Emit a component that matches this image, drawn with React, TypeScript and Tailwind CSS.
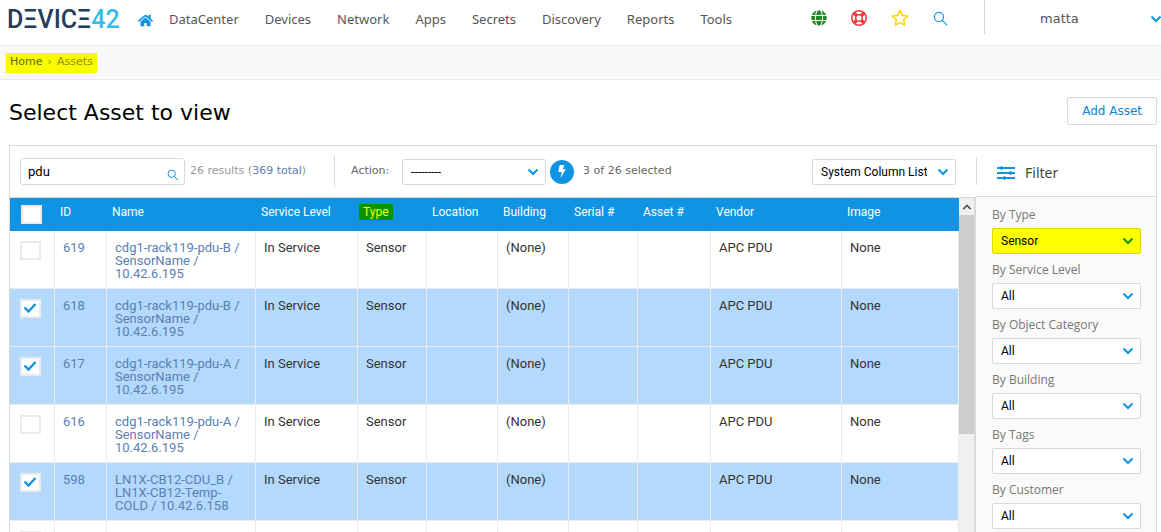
import { type ReactNode } from "react";
import { FaGlobe, FaHome } from "react-icons/fa";
import { clsx } from "clsx";

const NAV = ["DataCenter", "Devices", "Network", "Apps", "Secrets", "Discovery", "Reports", "Tools"];

const COLUMNS = [
  { label: "ID", width: "w-[52px]" },
  { label: "Name", width: "w-[149px]" },
  { label: "Service Level", width: "w-[102px]" },
  { label: "Type", width: "w-[69px]" },
  { label: "Location", width: "w-[71px]" },
  { label: "Building", width: "w-[71px]" },
  { label: "Serial #", width: "w-[69px]" },
  { label: "Asset #", width: "w-[73px]" },
  { label: "Vendor", width: "w-[131px]" },
  { label: "Image", width: "w-[117px]" },
];

const ROWS = [
  { id: "619", name: "cdg1-rack119-pdu-B / SensorName / 10.42.6.195", selected: false },
  { id: "618", name: "cdg1-rack119-pdu-B / SensorName / 10.42.6.195", selected: true },
  { id: "617", name: "cdg1-rack119-pdu-A / SensorName / 10.42.6.195", selected: true },
  { id: "616", name: "cdg1-rack119-pdu-A / SensorName / 10.42.6.195", selected: false },
  { id: "598", name: "LN1X-CB12-CDU_B / LN1X-CB12-Temp-COLD / 10.42.6.158", selected: true },
  { id: "", name: "", selected: false },
];

const FILTERS = [
  { label: "By Type", value: "Sensor" },
  { label: "By Service Level", value: "All" },
  { label: "By Object Category", value: "All" },
  { label: "By Building", value: "All" },
  { label: "By Tags", value: "All" },
  { label: "By Customer", value: "All" },
];

function Chevron({ className }: { className?: string }) {
  return (
    <svg viewBox="0 0 12 8" className={clsx("h-2 w-3", className)} fill="none" stroke="currentColor" strokeWidth="2" aria-hidden="true">
      <path d="M1.5 1.5 6 6l4.5-4.5" />
    </svg>
  );
}

function SearchIcon({ className }: { className?: string }) {
  return (
    <svg viewBox="0 0 16 16" className={className} fill="none" stroke="currentColor" strokeWidth="1.3" aria-hidden="true">
      <circle cx="6.3" cy="6.3" r="4.9" />
      <path d="m10 10 5 5" />
    </svg>
  );
}

function LifeRing() {
  return (
    <svg viewBox="0 0 16 16" className="size-4" fill="none" stroke="currentColor" aria-hidden="true">
      <circle cx="8" cy="8" r="7.2" strokeWidth="1.6" />
      <circle cx="8" cy="8" r="3.3" strokeWidth="1.5" />
      <path d="m2.8 2.8 2.7 2.7M13.2 2.8l-2.7 2.7M2.8 13.2l2.7-2.7M13.2 13.2l-2.7-2.7" strokeWidth="3.6" />
    </svg>
  );
}

function Star() {
  return (
    <svg viewBox="0 0 18 18" className="size-[18px]" fill="none" stroke="currentColor" strokeWidth="1.5" strokeLinejoin="round" aria-hidden="true">
      <path d="m9 1.5 2.3 4.9 5.3.7-3.9 3.7 1 5.4L9 13.6l-4.7 2.6 1-5.4-3.9-3.7 5.3-.7z" />
    </svg>
  );
}

function Sliders() {
  return (
    <svg viewBox="0 0 18 14" className="h-[14px] w-[18px]" stroke="currentColor" strokeWidth="2" aria-hidden="true">
      <path d="M0 2h18M0 7h18M0 12h18" />
      <path d="M4.5 0v4M13.5 5v4M7.5 10v4" strokeWidth="1.5" />
    </svg>
  );
}

function Select({ id, value, label, highlight }: { id: string; value: string; label?: string; highlight?: boolean }) {
  return (
    <div className="relative">
      <select
        id={id}
        aria-label={label}
        defaultValue={value}
        className={clsx(
          "block h-[26px] w-full appearance-none rounded-xs border pr-7 pl-2 text-xs text-black outline-none",
          highlight ? "border-[#d9d900] bg-[#ffff00]" : "border-[#d9d9d9] bg-white",
        )}
      >
        <option>{value}</option>
      </select>
      <Chevron className={clsx("pointer-events-none absolute top-[9px] right-[7px]", highlight ? "text-[#0a9400]" : "text-[#0f94e4]")} />
    </div>
  );
}

function Checkbox({ label, checked = false }: { label: string; checked?: boolean }) {
  return (
    <span className="relative block h-[19px] w-[21px]">
      <input
        type="checkbox"
        aria-label={label}
        defaultChecked={checked}
        className="peer block size-full appearance-none border-2 border-[#ebebeb] bg-white"
      />
      <svg
        viewBox="0 0 14 10"
        className="pointer-events-none absolute top-1 left-[3px] hidden h-[10px] w-[14px] text-[#0f94e4] peer-checked:block"
        fill="none"
        stroke="currentColor"
        strokeWidth="2.4"
        aria-hidden="true"
      >
        <path d="m1.5 4.5 4 4L12.5 1" />
      </svg>
    </span>
  );
}

function Cell({ children }: { children?: ReactNode }) {
  return <td className="border-r border-b border-[#ebebeb] pt-[10px] pr-1 pl-2 align-top">{children}</td>;
}

function TopBar() {
  return (
    <header className="flex h-[46px] shrink-0 items-start border-b border-[#ebebeb] text-[#555]">
      <a href="#" aria-label="Device42" className="ml-[7px] flex h-10 w-[111px] items-center font-['Roboto',sans-serif] text-[25px] font-medium whitespace-nowrap text-[#253d5b]">
        DΞVICΞ<span className="text-[#35bcea]">42</span>
      </a>
      <nav className="ml-5 flex h-10 items-center gap-[26px] font-['Noto_Sans',sans-serif] text-[13px]">
        <a href="#" aria-label="Home" className="-mr-[10px] text-[#0f94e4]">
          <FaHome size={15} />
        </a>
        {NAV.map((item) => (
          <a key={item} href="#">
            {item}
          </a>
        ))}
      </nav>
      <div className="ml-auto flex h-9 items-center gap-6">
        <a href="#" aria-label="Language" className="text-[#1d8a24]">
          <FaGlobe size={16} />
        </a>
        <a href="#" aria-label="Help" className="text-[#e8423f]">
          <LifeRing />
        </a>
        <a href="#" aria-label="Favorites" className="text-[#ffd400]">
          <Star />
        </a>
        <a href="#" aria-label="Search" className="text-[#0f94e4]">
          <SearchIcon className="size-[15px]" />
        </a>
      </div>
      <button type="button" className="ml-9 flex h-[34px] w-[177px] items-center justify-between border-l border-[#d4d4d4] pt-1 pl-[55px] text-[13px]">
        matta
        <Chevron className="-mr-px text-[#0f94e4]" />
      </button>
    </header>
  );
}

function Toolbar() {
  return (
    <div className="flex h-[52px] shrink-0 items-center border-b border-[#d9d9d9] pr-5 pl-[10px] text-[11px] text-[#666]">
      <div className="relative">
        <input
          type="text"
          aria-label="Search assets"
          defaultValue="pdu"
          className="block h-[27px] w-[165px] rounded-[3px] border border-[#d9d9d9] pr-6 pl-[7px] font-['Roboto',sans-serif] text-[13px] text-black outline-none"
        />
        <SearchIcon className="pointer-events-none absolute top-[11px] right-[6px] size-3 text-[#0f94e4]" />
      </div>
      <span className="ml-[5px] whitespace-nowrap text-[#999]">
        26 results (
        <a href="#" className="text-[#5b80b2]">
          369 total
        </a>
        )
      </span>
      <div className="ml-7 flex h-[31px] items-center border-l border-[#d9d9d9] pl-4">
        <label htmlFor="action" className="w-[51px]">
          Action:
        </label>
        <div className="w-36 font-['Roboto',sans-serif]">
          <Select id="action" value="---------" />
        </div>
        <button type="button" aria-label="Run action" className="ml-1 flex size-6 items-center justify-center rounded-full bg-[#0f94e4] text-white">
          <svg viewBox="0 0 10 14" className="h-[13px] w-[10px]" fill="currentColor" aria-hidden="true">
            <path d="M2.5 0h5L6 4.5h3L3.5 14 4.8 7.5H1z" />
          </svg>
        </button>
        <span className="ml-[9px] whitespace-nowrap">3 of 26 selected</span>
      </div>
      <div className="ml-auto w-36 font-['Roboto',sans-serif]">
        <Select id="columns" label="Column list" value="System Column List" />
      </div>
    </div>
  );
}

function AssetTable() {
  return (
    <table className="w-full table-fixed border-separate border-spacing-0 font-['Roboto',sans-serif] text-[13px] leading-[13px] text-[#333]">
      <thead className="bg-[#0f94e4] text-left text-xs leading-4 text-white">
        <tr className="h-[33px] align-top">
          <th className="w-[45px] pt-[7px] pl-[11px]">
            <Checkbox label="Select all" />
          </th>
          {COLUMNS.map(({ label, width }) => (
            <th key={label} className={clsx("pt-[6px] pl-[5px] font-normal whitespace-nowrap", width)}>
              {label === "Type" ? <span className="-ml-1 inline-block bg-[#0a9400] px-1 text-[#ffff00]">Type</span> : label}
            </th>
          ))}
        </tr>
      </thead>
      <tbody>
        {ROWS.map((row) => (
          <tr key={row.id} className={clsx("h-[58px]", row.selected && "bg-[#b3d9fc]")}>
            <td className="border-r border-b border-[#ebebeb] pt-[10px] pl-[10px] align-top">
              <Checkbox label={`Select asset ${row.id}`} checked={row.selected} />
            </td>
            <Cell>
              <a href="#" className="text-[#5b80b2]">
                {row.id}
              </a>
            </Cell>
            <Cell>
              <a href="#" className="text-[#5b80b2]">
                {row.name}
              </a>
            </Cell>
            <Cell>{row.id && "In Service"}</Cell>
            <Cell>{row.id && "Sensor"}</Cell>
            <Cell />
            <Cell>{row.id && "(None)"}</Cell>
            <Cell />
            <Cell />
            <Cell>{row.id && "APC PDU"}</Cell>
            <Cell>{row.id && "None"}</Cell>
          </tr>
        ))}
      </tbody>
    </table>
  );
}

function Scrollbar() {
  return (
    <div className="flex w-[15px] shrink-0 flex-col bg-[#f0f0f0]" aria-hidden="true">
      <div className="flex h-[17px] items-center justify-center text-[#555]">
        <Chevron className="w-[10px] rotate-180" />
      </div>
      <div className="h-[219px] bg-[#cdcdcd]" />
    </div>
  );
}

function FilterPanel() {
  return (
    <aside className="flex w-[180px] shrink-0 flex-col">
      <div className="flex h-[51px] shrink-0 items-center border-b border-[#d9d9d9]">
        <h2 className="flex h-7 w-full items-center gap-[10px] border-l border-[#d9d9d9] pt-1 pl-5 font-['Noto_Sans',sans-serif] text-sm text-[#444]">
          <span className="text-[#0f94e4]">
            <Sliders />
          </span>
          Filter
        </h2>
      </div>
      <div className="flex grow flex-col gap-[5px] bg-[#fafafa] pt-[7px] pr-[15px] pl-4">
        {FILTERS.map(({ label, value }, i) => (
          <div key={label}>
            <label htmlFor={`filter-${i}`} className="block h-6 font-['Open_Sans',sans-serif] text-xs leading-[22px] text-[#777]">
              {label}
            </label>
            <div className="font-['Roboto',sans-serif]">
              <Select id={`filter-${i}`} value={value} highlight={i === 0} />
            </div>
          </div>
        ))}
      </div>
    </aside>
  );
}

export default function App() {
  return (
    <div className="flex h-screen flex-col overflow-hidden bg-white font-['DejaVu_Sans',sans-serif]">
      <TopBar />
      <div className="flex h-[34px] shrink-0 items-center border-b border-[#ebebeb] bg-[#f9f9f9] pl-[6px] text-[11px]">
        <div className="flex h-5 items-center gap-[5px] bg-[#fbfb00] px-1 text-[#8f8f00]">
          <a href="#" className="text-[#5c6b00]">
            Home
          </a>
          <span>›</span>
          <span>Assets</span>
        </div>
      </div>
      <main className="flex min-h-0 grow flex-col pr-1 pl-[9px]">
        <div className="flex h-[65px] shrink-0 items-center justify-between">
          <h1 className="text-[22px] text-black">Select Asset to view</h1>
          <button type="button" className="mb-1 h-7 rounded-xs border border-[#d9d9d9] px-[14px] text-xs text-[#0f84d8]">
            Add Asset
          </button>
        </div>
        <div className="flex min-h-0 grow border-x border-t border-[#d9d9d9]">
          <div className="flex min-w-0 grow flex-col">
            <Toolbar />
            <div className="flex min-h-0 grow border-r-2 border-[#d9d9d9]">
              <div className="min-w-0 grow overflow-hidden">
                <AssetTable />
              </div>
              <Scrollbar />
            </div>
          </div>
          <FilterPanel />
        </div>
      </main>
    </div>
  );
}
